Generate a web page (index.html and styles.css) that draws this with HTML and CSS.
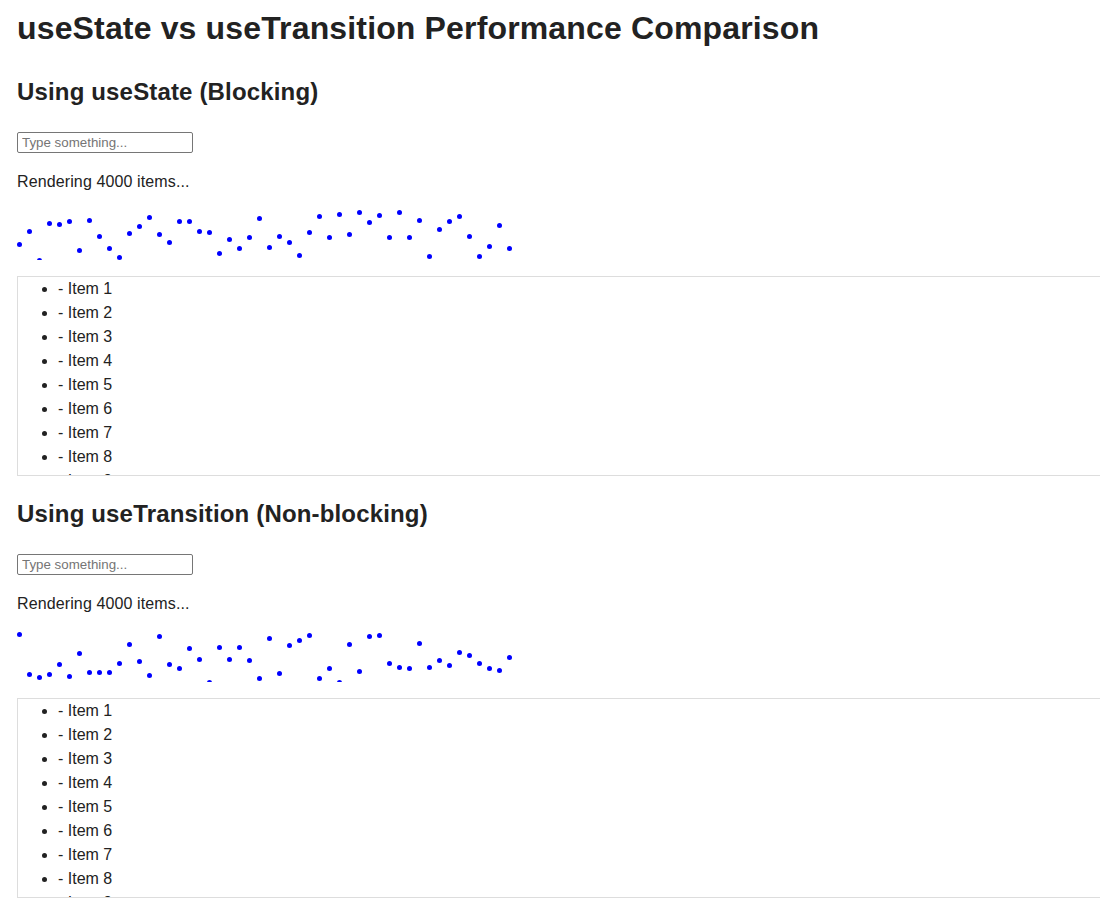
FILE: index.html
```html
<!DOCTYPE html>
<html lang="en">
<head>
<meta charset="utf-8">
<title>useState vs useTransition Performance Comparison</title>
<link rel="stylesheet" href="styles.css">
</head>
<body>
<div class="app">
  <h1 class="title">useState vs useTransition Performance Comparison</h1>

  <section class="demo">
    <h2 class="demo-title">Using useState (Blocking)</h2>
    <input class="demo-input" type="text" placeholder="Type something...">
    <p class="demo-status">Rendering 4000 items...</p>
    <div class="dots">
      <span class="dot" style="margin-top:32px"></span>
      <span class="dot" style="margin-top:19px"></span>
      <span class="dot" style="margin-top:48px"></span>
      <span class="dot" style="margin-top:11px"></span>
      <span class="dot" style="margin-top:12px"></span>
      <span class="dot" style="margin-top:9px"></span>
      <span class="dot" style="margin-top:38px"></span>
      <span class="dot" style="margin-top:8px"></span>
      <span class="dot" style="margin-top:24px"></span>
      <span class="dot" style="margin-top:36px"></span>
      <span class="dot" style="margin-top:45px"></span>
      <span class="dot" style="margin-top:21px"></span>
      <span class="dot" style="margin-top:14px"></span>
      <span class="dot" style="margin-top:5px"></span>
      <span class="dot" style="margin-top:22px"></span>
      <span class="dot" style="margin-top:30px"></span>
      <span class="dot" style="margin-top:9px"></span>
      <span class="dot" style="margin-top:9px"></span>
      <span class="dot" style="margin-top:19px"></span>
      <span class="dot" style="margin-top:20px"></span>
      <span class="dot" style="margin-top:41px"></span>
      <span class="dot" style="margin-top:27px"></span>
      <span class="dot" style="margin-top:36px"></span>
      <span class="dot" style="margin-top:25px"></span>
      <span class="dot" style="margin-top:6px"></span>
      <span class="dot" style="margin-top:35px"></span>
      <span class="dot" style="margin-top:24px"></span>
      <span class="dot" style="margin-top:30px"></span>
      <span class="dot" style="margin-top:43px"></span>
      <span class="dot" style="margin-top:20px"></span>
      <span class="dot" style="margin-top:4px"></span>
      <span class="dot" style="margin-top:25px"></span>
      <span class="dot" style="margin-top:2px"></span>
      <span class="dot" style="margin-top:22px"></span>
      <span class="dot" style="margin-top:0px"></span>
      <span class="dot" style="margin-top:10px"></span>
      <span class="dot" style="margin-top:3px"></span>
      <span class="dot" style="margin-top:25px"></span>
      <span class="dot" style="margin-top:0px"></span>
      <span class="dot" style="margin-top:25px"></span>
      <span class="dot" style="margin-top:8px"></span>
      <span class="dot" style="margin-top:44px"></span>
      <span class="dot" style="margin-top:17px"></span>
      <span class="dot" style="margin-top:9px"></span>
      <span class="dot" style="margin-top:4px"></span>
      <span class="dot" style="margin-top:24px"></span>
      <span class="dot" style="margin-top:44px"></span>
      <span class="dot" style="margin-top:34px"></span>
      <span class="dot" style="margin-top:13px"></span>
      <span class="dot" style="margin-top:36px"></span>
    </div>
    <div class="list-box">
      <ul class="item-list">
        <li>- Item 1</li>
        <li>- Item 2</li>
        <li>- Item 3</li>
        <li>- Item 4</li>
        <li>- Item 5</li>
        <li>- Item 6</li>
        <li>- Item 7</li>
        <li>- Item 8</li>
        <li>- Item 9</li>
        <li>- Item 10</li>
      </ul>
    </div>
  </section>

  <section class="demo">
    <h2 class="demo-title">Using useTransition (Non-blocking)</h2>
    <input class="demo-input" type="text" placeholder="Type something...">
    <p class="demo-status">Rendering 4000 items...</p>
    <div class="dots">
      <span class="dot" style="margin-top:0px"></span>
      <span class="dot" style="margin-top:40px"></span>
      <span class="dot" style="margin-top:43px"></span>
      <span class="dot" style="margin-top:40px"></span>
      <span class="dot" style="margin-top:30px"></span>
      <span class="dot" style="margin-top:42px"></span>
      <span class="dot" style="margin-top:19px"></span>
      <span class="dot" style="margin-top:38px"></span>
      <span class="dot" style="margin-top:38px"></span>
      <span class="dot" style="margin-top:38px"></span>
      <span class="dot" style="margin-top:29px"></span>
      <span class="dot" style="margin-top:10px"></span>
      <span class="dot" style="margin-top:27px"></span>
      <span class="dot" style="margin-top:41px"></span>
      <span class="dot" style="margin-top:2px"></span>
      <span class="dot" style="margin-top:30px"></span>
      <span class="dot" style="margin-top:34px"></span>
      <span class="dot" style="margin-top:14px"></span>
      <span class="dot" style="margin-top:25px"></span>
      <span class="dot" style="margin-top:48px"></span>
      <span class="dot" style="margin-top:13px"></span>
      <span class="dot" style="margin-top:25px"></span>
      <span class="dot" style="margin-top:13px"></span>
      <span class="dot" style="margin-top:26px"></span>
      <span class="dot" style="margin-top:44px"></span>
      <span class="dot" style="margin-top:4px"></span>
      <span class="dot" style="margin-top:39px"></span>
      <span class="dot" style="margin-top:11px"></span>
      <span class="dot" style="margin-top:6px"></span>
      <span class="dot" style="margin-top:1px"></span>
      <span class="dot" style="margin-top:44px"></span>
      <span class="dot" style="margin-top:34px"></span>
      <span class="dot" style="margin-top:48px"></span>
      <span class="dot" style="margin-top:10px"></span>
      <span class="dot" style="margin-top:37px"></span>
      <span class="dot" style="margin-top:2px"></span>
      <span class="dot" style="margin-top:1px"></span>
      <span class="dot" style="margin-top:29px"></span>
      <span class="dot" style="margin-top:33px"></span>
      <span class="dot" style="margin-top:34px"></span>
      <span class="dot" style="margin-top:9px"></span>
      <span class="dot" style="margin-top:33px"></span>
      <span class="dot" style="margin-top:26px"></span>
      <span class="dot" style="margin-top:31px"></span>
      <span class="dot" style="margin-top:18px"></span>
      <span class="dot" style="margin-top:21px"></span>
      <span class="dot" style="margin-top:29px"></span>
      <span class="dot" style="margin-top:34px"></span>
      <span class="dot" style="margin-top:36px"></span>
      <span class="dot" style="margin-top:23px"></span>
    </div>
    <div class="list-box">
      <ul class="item-list">
        <li>- Item 1</li>
        <li>- Item 2</li>
        <li>- Item 3</li>
        <li>- Item 4</li>
        <li>- Item 5</li>
        <li>- Item 6</li>
        <li>- Item 7</li>
        <li>- Item 8</li>
        <li>- Item 9</li>
        <li>- Item 10</li>
      </ul>
    </div>
  </section>
</div>
</body>
</html>
```

FILE: styles.css
```css
html, body {
  overflow: hidden;
}

body {
  margin: 0;
  background: #ffffff;
  color: #222222;
  font-family: "Liberation Sans", Arial, sans-serif;
  font-size: 16px;
  line-height: 1.5;
}

.app {
  padding: 10px 0 0 17px;
}

.title {
  margin: 0;
  font-size: 32px;
  line-height: 37px;
  font-weight: bold;
  letter-spacing: 0.15px;
}

.demo {
  display: flex;
  flex-direction: column;
  align-items: flex-start;
}

.demo-title {
  margin: 31px 0 0;
  font-size: 24px;
  line-height: 28px;
  font-weight: bold;
  letter-spacing: 0.16px;
}

.demo + .demo .demo-title {
  margin-top: 24px;
}

.demo-input {
  margin: 26px 0 0;
  box-sizing: border-box;
  width: 176px;
  height: 21px;
  padding: 1px 4px;
  border: 1px solid #767676;
  border-radius: 2px;
  font-family: "Liberation Sans", Arial, sans-serif;
  font-size: 13.333px;
  color: #000;
  background: #fff;
}

.demo-input::placeholder {
  color: #757575;
}

.demo-status {
  margin: 17px 0 0;
  line-height: 24px;
  letter-spacing: 0.12px;
}

.dots {
  display: flex;
  gap: 5px;
  height: 50px;
  margin-top: 16px;
  overflow: hidden;
}

.dot {
  flex: none;
  width: 5px;
  height: 5px;
  border-radius: 50%;
  background: #0000ff;
}

.list-box {
  box-sizing: border-box;
  width: 1100px;
  height: 200px;
  margin-top: 16px;
  border: 1px solid #dddddd;
  overflow: hidden;
}

.item-list {
  margin: 0;
  padding-left: 40px;
  list-style: disc;
}

.item-list li {
  line-height: 24px;
}
```
